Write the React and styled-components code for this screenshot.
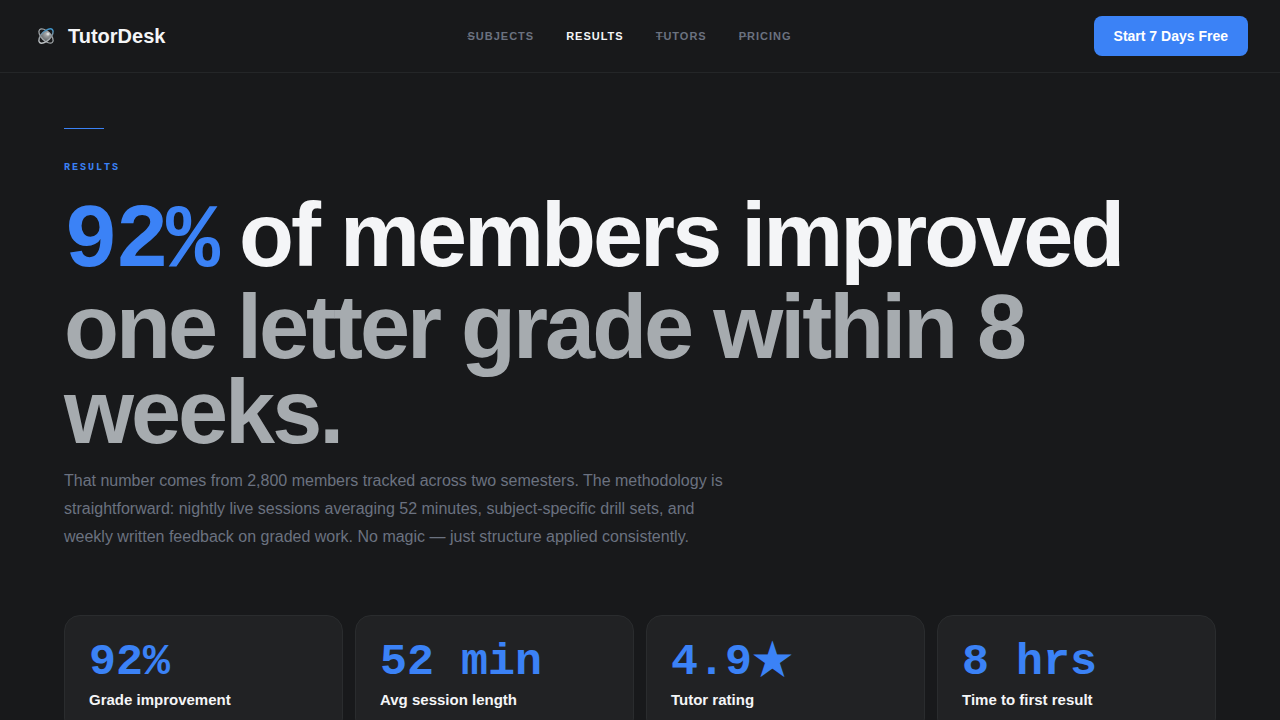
import styled, { createGlobalStyle } from "styled-components";

const theme = {
  bg: "#18191b",
  card: "#212224",
  border: "#2a2c2e",
  blue: "#3b82f6",
  white: "#f4f5f7",
  silver: "#a6abaf",
  gray: "#6b7280",
  sans: `"Liberation Sans", Arial, sans-serif`,
  mono: `"Liberation Mono", monospace`,
  symbol: `"Noto Sans CJK JP", sans-serif`,
};

const GlobalStyle = createGlobalStyle`
  * {
    box-sizing: border-box;
  }

  body {
    margin: 0;
    background: ${theme.bg};
    color: ${theme.white};
    font-family: ${theme.sans};
  }
`;

const Header = styled.header`
  display: flex;
  align-items: center;
  justify-content: space-between;
  padding: 16px 32px;
  border-bottom: 1px solid #242628;
`;

const Brand = styled.a`
  display: flex;
  align-items: center;
  gap: 8px;
  color: ${theme.white};
  font-size: 20px;
  font-weight: 700;
  text-decoration: none;
`;

const Nav = styled.nav`
  display: flex;
  gap: 32px;
`;

const NavLink = styled.a`
  position: relative;
  color: ${({ $active }) => ($active ? theme.white : theme.gray)};
  font-size: 11px;
  font-weight: 700;
  letter-spacing: 1px;
  text-decoration: none;
  text-transform: uppercase;

  &::after {
    content: "";
    display: ${({ $active }) => ($active ? "none" : "block")};
    position: absolute;
    top: 50%;
    left: 0;
    width: 8px;
    height: 1px;
    background: ${theme.gray};
    opacity: 0.6;
  }
`;

const TrialButton = styled.button`
  height: 40px;
  padding: 0 20px;
  border: 0;
  border-radius: 8px;
  background: ${theme.blue};
  color: #fff;
  font-family: inherit;
  font-size: 14px;
  font-weight: 700;
  cursor: pointer;
`;

const Main = styled.main`
  padding: 55px 64px 64px;
`;

const Rule = styled.div`
  width: 40px;
  height: 1px;
  background: ${theme.blue};
`;

const Eyebrow = styled.p`
  margin: 32px 0 18px;
  color: ${theme.blue};
  font-family: ${theme.mono};
  font-size: 10px;
  font-weight: 700;
  line-height: 14px;
  letter-spacing: 2px;
  text-transform: uppercase;
`;

const Title = styled.h1`
  margin: 0;
  font-size: 90px;
  font-weight: 700;
  line-height: 85px;
  letter-spacing: -3px;
`;

const Figure = styled.span`
  color: ${theme.blue};
  font-family: ${theme.mono};
`;

const Muted = styled.span`
  display: block;
  color: ${theme.silver};
`;

const Lead = styled.p`
  max-width: 680px;
  margin: 12px 0 64px;
  color: ${theme.gray};
  font-size: 16px;
  line-height: 28px;
`;

const Stats = styled.section`
  display: grid;
  grid-template-columns: repeat(4, 1fr);
  gap: 12px;
`;

const Card = styled.article`
  padding: 24px;
  border: 1px solid ${theme.border};
  border-radius: 16px;
  background: ${theme.card};
`;

const Value = styled.div`
  color: ${theme.blue};
  font-family: ${theme.mono};
  font-size: 45px;
  font-weight: 700;
  line-height: 45px;
`;

const Symbol = styled.span`
  font-family: ${theme.symbol};
  font-size: 41px;
  line-height: 0;
`;

const Label = styled.div`
  margin-top: 6px;
  font-size: 15px;
  font-weight: 700;
  line-height: 18px;
`;

const links = ["Subjects", "Results", "Tutors", "Pricing"];

const stats = [
  { value: "92%", label: "Grade improvement" },
  { value: "52 min", label: "Avg session length" },
  { value: "4.9", symbol: "★", label: "Tutor rating" },
  { value: "8 hrs", label: "Time to first result" },
];

const Logo = () => (
  <svg width="28" height="28" viewBox="0 0 28 28" fill="none" aria-hidden="true">
    <defs>
      <linearGradient id="orbit" x1="7" y1="21" x2="21" y2="7" gradientUnits="userSpaceOnUse">
        <stop stopColor="#d2d5d7" />
        <stop offset="0.5" stopColor="#8b9297" />
        <stop offset="0.85" stopColor="#3b92c8" />
      </linearGradient>
      <radialGradient id="core" cx="0.6" cy="0.3" r="0.8">
        <stop stopColor="#b4b6b7" />
        <stop offset="1" stopColor="#54595c" />
      </radialGradient>
    </defs>
    <circle cx="14" cy="14" r="5" fill="url(#core)" />
    <ellipse cx="14" cy="14" rx="9" ry="4.5" transform="rotate(45 14 14)" stroke="#a0a5a8" strokeWidth="1.3" />
    <ellipse cx="14" cy="14" rx="9" ry="4.5" transform="rotate(-45 14 14)" stroke="url(#orbit)" strokeWidth="1.5" />
    <circle cx="16" cy="12" r="1.5" fill="#d9dbdb" />
  </svg>
);

const App = () => {
  return (
    <>
      <GlobalStyle />
      <Header>
        <Brand href="#">
          <Logo />
          TutorDesk
        </Brand>
        <Nav>
          {links.map((link) => (
            <NavLink key={link} href="#" $active={link === "Results"}>
              {link}
            </NavLink>
          ))}
        </Nav>
        <TrialButton type="button">Start 7 Days Free</TrialButton>
      </Header>
      <Main>
        <Rule />
        <Eyebrow>Results</Eyebrow>
        <Title>
          <Figure>92%</Figure> of members improved
          <Muted>one letter grade within 8 weeks.</Muted>
        </Title>
        <Lead>
          That number comes from 2,800 members tracked across two semesters. The
          methodology is straightforward: nightly live sessions averaging 52
          minutes, subject-specific drill sets, and weekly written feedback on
          graded work. No magic — just structure applied consistently.
        </Lead>
        <Stats>
          {stats.map(({ value, symbol, label }) => (
            <Card key={label}>
              <Value>
                {value}
                {symbol && <Symbol>{symbol}</Symbol>}
              </Value>
              <Label>{label}</Label>
            </Card>
          ))}
        </Stats>
      </Main>
    </>
  );
};

export default App;
